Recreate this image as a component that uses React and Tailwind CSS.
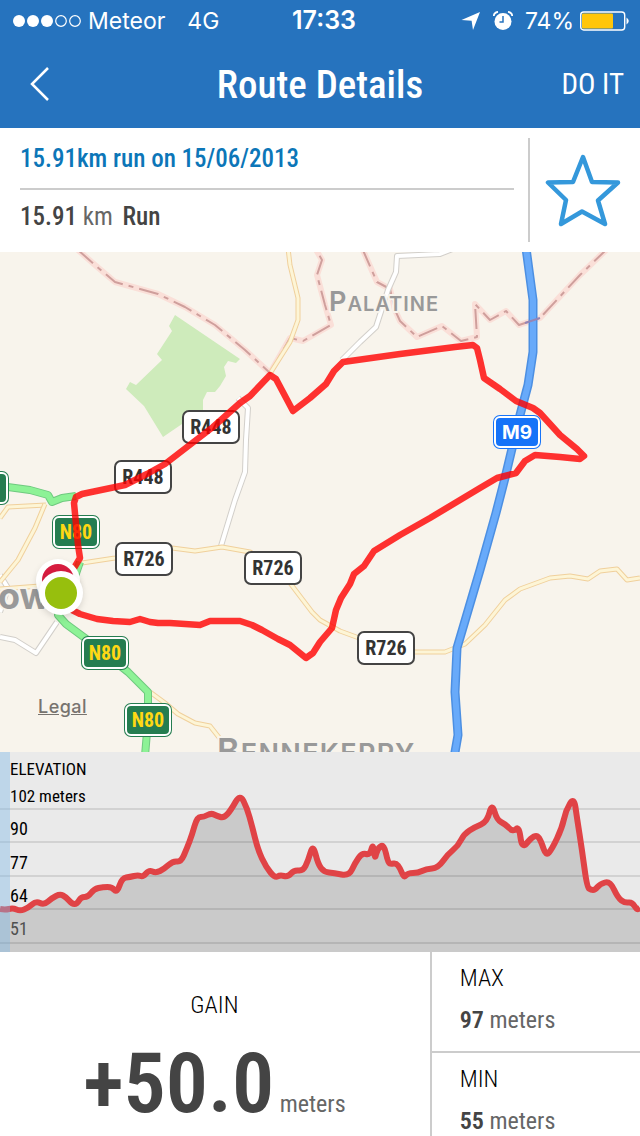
import React from "react";

const narrow = "font-['Roboto_Condensed',Roboto,sans-serif]";

const motorway = "M526 248 L533 300 L533 352 L528 385 L520 415 L505 478 L496 513 L480 570 L457 648 L455 692 L458 735 L454 758";
const primaryRoads = [
  "M0 486 L30 490 L48 495 L52 502 L62 498 L76 496",
  "M80 562 L72 585 L58 615 L66 624 L85 638 L128 672 L148 692 L148 720 L145 756",
];
const secondaryRoads = [
  "M288 248 L290 265 L298 298 L298 320 L290 342 L271 372",
  "M0 518 L8 507 L46 505",
  "M45 504 L35 528 L18 560 L0 582",
  "M82 563 L115 558 L172 548 L195 551 L222 547 L250 552 L280 570 L290 583 L312 612 L320 620 L340 631 L370 642 L415 652 L445 652 L465 644 L485 625 L505 600 L520 589 L550 578 L570 576 L588 579 L600 571 L617 569 L627 580 L640 578",
  "M150 692 L165 703 L178 714 L195 723 L210 726 L221 740",
  "M0 589 L40 586",
];
const minorRoads = [
  "M460 246 L440 254 L397 256 L396 272 L388 290 L376 327 L360 342 L342 360",
  "M238 398 L248 408 L246 440 L245 472 L235 500 L221 546",
  "M0 637 L15 640 L36 653 L57 622",
  "M0 575 L8 588 L0 612",
];
const boundaries = [
  "M78 250 L95 265 L115 282 L158 294 L185 307 L215 325 L245 350 L270 373 L290 338 L303 341 L331 325 L325 305 L317 275 L322 260 L315 248",
  "M362 248 L377 282 L390 289 L395 310 L400 321 L417 337 L442 326 L461 341 L477 337 L475 304 L490 320 L506 311 L519 325 L540 318 L580 275 L606 250",
];
const park =
  "M175 315 L240 359 L236 363 L228 361 L224 367 L226 376 L220 386 L215 392 L207 392 L203 400 L203 416 L182 424 L163 437 L144 406 L126 389 L130 382 L136 385 L162 360 L157 354 L172 331 L169 326 Z";
const route =
  "M66 607 L80 614 L97 619 L113 621 L130 622 L140 619 L150 622 L158 623 L170 623 L200 625 L210 621 L225 621 L240 621 L252 625 L262 630 L278 639 L290 645 L306 658 L313 653 L320 642 L332 628 L336 610 L341 598 L350 584 L354 574 L364 566 L374 551 L387 543 L400 535 L430 518 L460 500 L480 488 L497 478 L516 473 L525 461 L535 455 L560 457 L580 459 L584 456 L577 449 L560 435 L540 413 L533 408 L516 401 L500 389 L484 378 L480 360 L477 348 L473 345 L455 347 L400 354 L343 362 L334 371 L326 384 L310 398 L293 411 L276 379 L270 375 L250 396 L240 403 L213 427 L165 464 L147 474 L125 485 L82 494 L76 497 L74 503 L78 545 L80 558 L74 568";

const elevation = [
  [0, 909], [5, 910], [13, 908], [20, 911], [28, 908], [36, 901], [44, 905], [52, 898], [60, 894], [66, 897], [72, 904],
  [77, 904], [81, 897], [88, 897], [94, 889], [103, 887], [112, 887], [117, 893], [122, 878], [130, 877], [138, 875],
  [143, 877], [149, 870], [156, 873], [164, 869], [173, 861], [181, 862], [187, 848], [192, 835], [197, 817], [204, 817],
  [211, 813], [217, 816], [224, 818], [231, 810], [240, 794], [247, 808], [252, 826], [258, 850], [266, 867], [275, 878],
  [280, 875], [288, 877], [294, 870], [303, 871], [308, 861], [313, 844], [318, 864], [324, 872], [334, 873], [349, 876],
  [355, 863], [362, 853], [370, 855], [373, 843], [375, 860], [377, 849], [384, 844], [388, 863], [391, 864], [396, 863],
  [400, 868], [404, 878], [408, 873], [418, 873], [426, 869], [438, 868], [448, 854], [458, 846], [464, 834], [475, 827],
  [487, 822], [492, 803], [497, 820], [505, 824], [513, 832], [519, 826], [522, 849], [531, 838], [537, 835], [541, 841],
  [546, 856], [552, 849], [562, 828], [566, 810], [574, 797], [577, 818], [582, 850], [587, 887], [591, 890], [595, 890],
  [600, 884], [610, 881], [618, 898], [625, 903], [632, 902], [637, 910], [640, 908],
];

// Rounds the corners of a polyline by curving through segment midpoints.
function smooth(points) {
  const [first, ...rest] = points;
  const last = rest[rest.length - 1];
  const curves = rest.slice(0, -1).map(([x, y], i) => {
    const [nx, ny] = rest[i + 1];
    return `Q${x} ${y} ${(x + nx) / 2} ${(y + ny) / 2}`;
  });
  return `M${first[0]} ${first[1]} ${curves.join(" ")} L${last[0]} ${last[1]}`;
}

const elevationPath = smooth(elevation);

function RegionalShield({ x, y, label }) {
  return (
    <g>
      <rect x={x} y={y} width="56" height="32" rx="6" fill="#fff" stroke="#444" strokeWidth="2" />
      <text x={x + 28} y={y + 23} textAnchor="middle" className={`${narrow} text-[20px] font-bold`} fill="#333">
        {label}
      </text>
    </g>
  );
}

function RoadShield({ x, y, label, fill, color, className }) {
  return (
    <g>
      <rect x={x} y={y} width="48" height="34" rx="7" fill={fill} />
      <rect x={x + 2} y={y + 2} width="44" height="30" rx="5" fill="none" stroke="#fff" strokeWidth="2" />
      <text x={x + 24} y={y + 24} textAnchor="middle" className={className} fill={color}>
        {label}
      </text>
    </g>
  );
}

function Road({ d, casing, fill, outer, inner }) {
  return (
    <g fill="none" strokeLinejoin="round">
      <path d={d} stroke={casing} strokeWidth={outer} />
      <path d={d} stroke={fill} strokeWidth={inner} />
    </g>
  );
}

function RouteMap() {
  const national = { fill: "#257d50", color: "#ffd814", className: `${narrow} text-[20px] font-bold` };
  return (
    <section className="relative" aria-label="Route map">
      <svg viewBox="0 252 640 500" className="block w-full bg-[#f8f4ec]">
        <path d={park} fill="#ceebbb" />
        <g fill="none" strokeLinejoin="round">
          {boundaries.map((d) => (
            <g key={d}>
              <path d={d} stroke="#fadfd8" strokeWidth="6" />
              <path d={d} stroke="#cf9f9c" strokeWidth="2" strokeDasharray="20 6 5 6" />
            </g>
          ))}
        </g>
        {minorRoads.map((d) => <Road key={d} d={d} casing="#d2cfca" fill="#fff" outer={6} inner={4} />)}
        {secondaryRoads.map((d) => <Road key={d} d={d} casing="#f0d09c" fill="#fdf5d6" outer={5} inner={3} />)}
        {primaryRoads.map((d) => <Road key={d} d={d} casing="#6fc97f" fill="#8df296" outer={8} inner={6} />)}
        <Road d={motorway} casing="#4c8fe2" fill="#68aafa" outer={9} inner={6} />
        <path d="M525 323 L540 318" stroke="#9585b5" strokeWidth="2" fill="none" />

        <g fill="#999" stroke="#f8f4ec" strokeWidth="4" paintOrder="stroke" strokeLinejoin="round" className="font-[Inter,sans-serif]">
          <text x="329" y="311" className="text-[20px] font-semibold tracking-wider">
            <tspan className="text-[27px]">P</tspan>ALATINE
          </text>
          <text x="217" y="763" className="text-[27px] font-semibold tracking-wider">
            <tspan className="text-[34px]">B</tspan>ENNEKERRY
          </text>
          <text x="-2" y="609" className="text-[36px] font-bold">ow</text>
        </g>

        <RegionalShield x={183} y={411} label="R448" />
        <RegionalShield x={115} y={461} label="R448" />
        <RegionalShield x={116} y={543} label="R726" />
        <RegionalShield x={245} y={552} label="R726" />
        <RegionalShield x={358} y={632} label="R726" />
        <RoadShield x={-39} y={471} label="" {...national} />
        <RoadShield x={52} y={515} label="N80" {...national} />
        <RoadShield x={81} y={636} label="N80" {...national} />
        <RoadShield x={124} y={703} label="N80" {...national} />
        <RoadShield x={493} y={415} label="M9" fill="#1673f8" color="#fff" className="font-[Inter,sans-serif] text-[19px] font-bold" />

        <path d={route} fill="none" stroke="#ff0000" strokeOpacity="0.8" strokeWidth="6.5" strokeLinejoin="round" strokeLinecap="round" />

        <g className="drop-shadow-md">
          <circle cx="58" cy="581" r="22" fill="#fff" />
          <circle cx="58" cy="580" r="16" fill="#d61c3f" />
        </g>
        <g className="drop-shadow-md">
          <circle cx="61" cy="593" r="22" fill="#fff" />
          <circle cx="61" cy="593" r="16" fill="#97bf0d" />
        </g>
      </svg>
      <a href="#legal" className="absolute bottom-8 left-[38px] font-[Inter,sans-serif] text-[18px] leading-[26px] font-medium tracking-wide text-[#77736f] underline">
        Legal
      </a>
    </section>
  );
}

function ElevationChart() {
  return (
    <section className={`relative h-[200px] bg-[#eaeaea] ${narrow} text-[17px] text-black`} aria-label="Elevation">
      <svg viewBox="0 752 640 200" preserveAspectRatio="none" className="absolute inset-0 h-full w-full">
        <path d={`${elevationPath} V952 H0 Z`} fill="#cacaca" />
        <path d="M0 809H640M0 842H640M0 876H640M0 909H640M0 943H640" stroke="#000" strokeOpacity="0.1" strokeWidth="2" />
        <path d={elevationPath} fill="none" stroke="#e04346" strokeWidth="6" strokeLinejoin="round" />
        <rect x="0" y="752" width="10" height="200" fill="#7db8e8" fillOpacity="0.4" />
      </svg>
      <div className="relative flex flex-col pt-1 pl-[10px]">
        <h2 className="leading-[26px]">ELEVATION</h2>
        <span className="leading-[28px]">102 meters</span>
        <span className="pt-1 text-lg leading-[30px]">90</span>
        <span className="pt-1 text-lg leading-[29px]">77</span>
        <span className="pt-1 text-lg leading-[29px]">64</span>
        <span className="pt-1 text-lg leading-[30px] text-[#505050]">51</span>
      </div>
    </section>
  );
}

function StatusBar() {
  return (
    <div className="grid h-10 grid-cols-[1fr_auto_1fr] items-center pt-0.5 pr-2.5 pl-3 font-[Inter,sans-serif] text-[23px]">
      <div className="flex items-center">
        <svg viewBox="0 0 70 14" className="h-[14px] w-[70px]" aria-label="Signal">
          <circle cx="7" cy="7" r="6" fill="#fff" />
          <circle cx="21" cy="7" r="6" fill="#fff" />
          <circle cx="35" cy="7" r="6" fill="#fff" />
          <circle cx="49" cy="7" r="5.3" fill="none" stroke="#fff" strokeWidth="1.2" />
          <circle cx="63" cy="7" r="5.3" fill="none" stroke="#fff" strokeWidth="1.2" />
        </svg>
        <span className="ml-[6px]">Meteor</span>
        <span className="ml-[22px]">4G</span>
      </div>
      <time className="pl-1.5 text-[25px] font-semibold">17:33</time>
      <div className="flex items-center justify-end">
        <svg viewBox="0 0 20 20" className="size-5" fill="#fff" aria-label="Location">
          <path d="M19 1 L12 19 L10.600 9.800 L0.500 9 Z" />
        </svg>
        <svg viewBox="0 0 20 20" className="ml-3 size-5" aria-label="Alarm">
          <circle cx="10" cy="10.500" r="8.500" fill="#fff" />
          <path d="M0.800 5 Q1 1.500 5 0.800M19.200 5 Q19 1.500 15 0.800" stroke="#fff" strokeWidth="1.800" fill="none" />
          <path d="M10 5 V11 H6.500" stroke="#2673be" strokeWidth="1.500" fill="none" />
        </svg>
        <span className="ml-3">74%</span>
        <svg viewBox="0 0 50 20" className="ml-[6px] h-5 w-[50px]" aria-label="Battery">
          <rect x="0.700" y="1" width="44" height="18" rx="3" fill="none" stroke="#fff" strokeWidth="1.400" />
          <rect x="2" y="2.500" width="31" height="15" rx="1" fill="#ffc60a" />
          <path d="M46.500 6.500 Q51 10 46.500 13.500 Z" fill="#fff" />
        </svg>
      </div>
    </div>
  );
}

function Stat({ label, value }) {
  return (
    <div className="flex flex-col gap-3 pt-[11px] pb-4 pl-7">
      <h3 className="text-2xl leading-[30px] font-light text-black">{label}</h3>
      <p className="text-2xl leading-[30px] text-[#666]">
        <strong className="font-semibold text-[#444]">{value}</strong> meters
      </p>
    </div>
  );
}

export default function App() {
  return (
    <main className={`min-h-screen bg-white ${narrow}`}>
      <header className="bg-[#2673be] text-white">
        <StatusBar />
        <nav className="grid h-[88px] grid-cols-[1fr_auto_1fr] items-center px-4">
          <button type="button" aria-label="Back" className="flex h-12 w-12 items-center justify-center">
            <svg viewBox="0 0 20 36" className="h-9 w-5" fill="none" stroke="#fff" strokeWidth="2.500">
              <path d="M18 2 L2 18 L18 34" />
            </svg>
          </button>
          <h1 className="pt-0.5 text-[39px] leading-[48px] font-medium">Route Details</h1>
          <button type="button" className="justify-self-end pt-0.5 text-[29px]">DO IT</button>
        </nav>
      </header>

      <section className="flex h-[124px] items-center">
        <div className="ml-5 flex-1 pb-1 text-[25px]">
          <h2 className="border-b-2 border-[#ccc] pb-2.5 leading-[38px] font-medium text-[#0c76b8]">15.91km run on 15/06/2013</h2>
          <p className="pt-2 leading-[38px] text-[#666]">
            <strong className="font-medium text-[#444]">15.91</strong> km{" "}
            <strong className="ml-1 font-medium text-[#444]">Run</strong>
          </p>
        </div>
        <div className="ml-3.5 flex h-[104px] w-28 items-center justify-center border-l-2 border-[#ccc] pt-0.5 pr-1">
          <button type="button" aria-label="Add to favourites">
            <svg viewBox="0 0 76 74" className="block h-[74px] w-[76px]" fill="none" stroke="#3498db" strokeWidth="4.500" strokeLinejoin="round">
              <path d="M38 3 L47 28 L73 28.500 L53 46.500 L60 70 L37 57.500 L16 70 L21 46 L3 28.500 L28 28 Z" />
            </svg>
          </button>
        </div>
      </section>

      <RouteMap />
      <ElevationChart />

      <section className="grid grid-cols-[67%_1fr]">
        <div className="flex flex-col items-center pt-9">
          <h3 className="text-2xl leading-[34px] font-light text-black">GAIN</h3>
          <p className="pt-4 text-2xl leading-[92px] text-[#666]">
            <strong className="text-[84px] font-semibold text-[#444]">+50.0</strong> meters
          </p>
        </div>
        <div className="ml-px divide-y-2 divide-[#ccc] border-l-2 border-[#ccc]">
          <Stat label="MAX" value="97" />
          <Stat label="MIN" value="55" />
        </div>
      </section>
    </main>
  );
}
